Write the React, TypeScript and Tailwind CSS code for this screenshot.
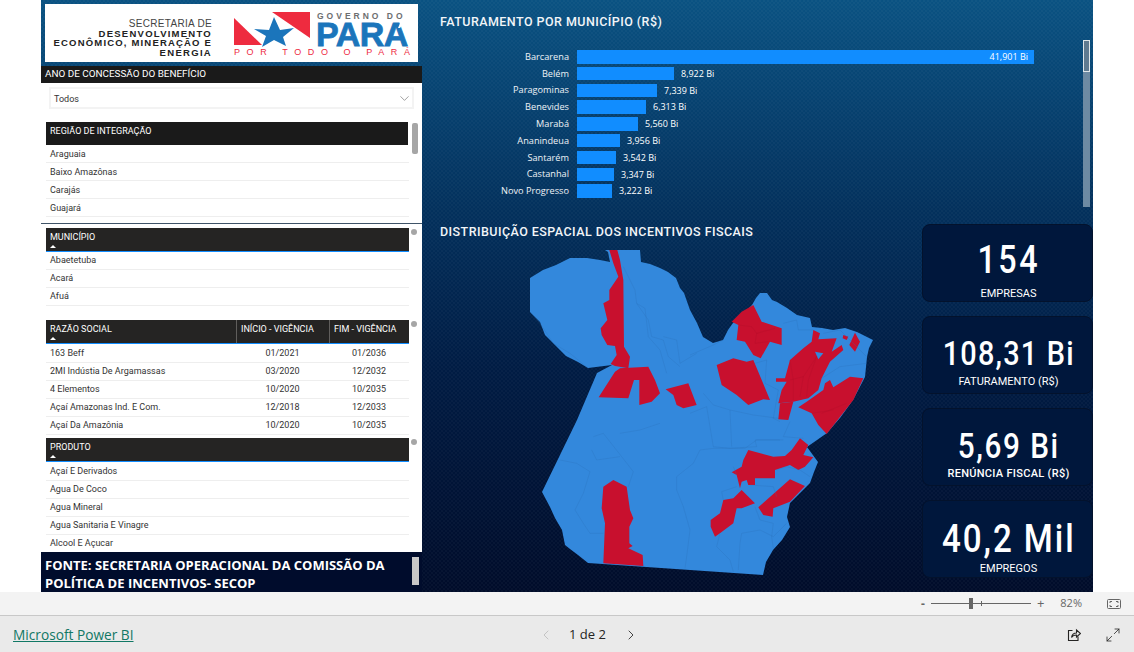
import { ChevronDown, ChevronLeft, ChevronRight, Maximize2 } from 'lucide-react'

const FATURAMENTO = [
  { nome: 'Barcarena', valor: '41,901 Bi', w: 457 },
  { nome: 'Belém', valor: '8,922 Bi', w: 97 },
  { nome: 'Paragominas', valor: '7,339 Bi', w: 80 },
  { nome: 'Benevides', valor: '6,313 Bi', w: 69 },
  { nome: 'Marabá', valor: '5,560 Bi', w: 61 },
  { nome: 'Ananindeua', valor: '3,956 Bi', w: 43 },
  { nome: 'Santarém', valor: '3,542 Bi', w: 39 },
  { nome: 'Castanhal', valor: '3,347 Bi', w: 37 },
  { nome: 'Novo Progresso', valor: '3,222 Bi', w: 35 },
]

const EMPRESAS = [
  ['163 Beff', '01/2021', '01/2036'],
  ['2MI Indústia De Argamassas', '03/2020', '12/2032'],
  ['4 Elementos', '10/2020', '10/2035'],
  ['Açaí Amazonas Ind. E Com.', '12/2018', '12/2033'],
  ['Açaí Da Amazônia', '10/2020', '10/2035'],
]

const KPIS = [
  { valor: '154', rotulo: 'EMPRESAS', num: 'mt-[16px] text-[38px] tracking-[3px]', rot: 'mt-[8px]' },
  { valor: '108,31 Bi', rotulo: 'FATURAMENTO (R$)', num: 'mt-[17px] text-[34px] tracking-[1.4px]', rot: 'mt-[3px]' },
  { valor: '5,69 Bi', rotulo: 'RENÚNCIA FISCAL (R$)', num: 'mt-[19px] text-[35px] tracking-[1.8px]', rot: 'mt-[1px] font-medium tracking-[0.3px]' },
  { valor: '40,2 Mil', rotulo: 'EMPREGOS', num: 'mt-[19px] text-[39px] tracking-[2.3px]', rot: 'mt-[4px]' },
]

const LOGO_FONT = "font-['Liberation_Sans',sans-serif]"

function Logo() {
  return (
    <div className="mx-[4px] mt-[4px] flex h-[58px] w-[373px] bg-white">
      <div className={`w-[167px] pt-[15px] text-right text-[9.5px] leading-[9.7px] whitespace-nowrap text-[#222] ${LOGO_FONT}`}>
        <div className="text-[10px] font-normal tracking-[0.3px] text-[#444]">SECRETARIA DE</div>
        <div className="font-bold tracking-[1.25px]">DESENVOLVIMENTO</div>
        <div className="font-bold tracking-[1.18px]">ECONÔMICO, MINERAÇÃO E</div>
        <div className="font-bold tracking-[1.3px]">ENERGIA</div>
      </div>
      <div className="relative ml-[22px] h-[58px] w-[178px]">
        <svg width="178" height="58" viewBox="0 0 178 58" className="absolute top-0 left-0">
          <polygon points="0,14 28,41 0,41" fill="#ee2b3f" />
          <polygon points="38,8 76,8 76,34" fill="#ee2b3f" />
          <polygon points="40,13 46,26 60,24 49,33 52,42 40,36 28,43 32,32 20,25 35,26" fill="#1b75bb" />
        </svg>
        <div className={`absolute top-[8px] left-[83px] text-[8.5px] leading-[9px] font-bold tracking-[3px] whitespace-nowrap text-[#6d6e70] ${LOGO_FONT}`}>
          GOVERNO DO
        </div>
        <div className={`absolute top-[18px] left-[82px] text-[34px] leading-[24px] font-bold tracking-[-0.5px] text-[#1b75bb] [-webkit-text-stroke:0.8px_#1b75bb] ${LOGO_FONT}`}>
          PARA
        </div>
        <svg width="8" height="8" viewBox="0 0 8 8" className="absolute top-[17px] left-[164px]">
          <polygon points="3,0 7,0 2,7 0,7" fill="#ffffff" />
        </svg>
        <div className={`absolute top-[44px] left-0 text-[9px] leading-[9px] tracking-[6.6px] whitespace-nowrap text-[#ee2b3f] ${LOGO_FONT}`}>
          POR TODO O PARÁ
        </div>
      </div>
    </div>
  )
}

function TabelaHead({ titulo }: { titulo: string }) {
  return (
    <div className="relative ml-[5px] h-[24px] w-[363px] border-b border-[#118dff] bg-[#252423] pl-[4px] text-white">
      <div className="pt-[3px] text-[9px] leading-[12px]">{titulo}</div>
      <Seta />
      <Bolinha />
    </div>
  )
}

function Seta() {
  return <div className="absolute bottom-[3px] left-[4px] h-0 w-0 border-x-[3px] border-b-[3px] border-x-transparent border-b-white" />
}

function Bolinha() {
  return <div className="absolute top-[1px] -right-[8px] h-[6px] w-[6px] rounded-full bg-[#a6a6a6]" />
}

function Linha({ texto, baixa = false }: { texto: string; baixa?: boolean }) {
  return (
    <div className={`ml-[5px] h-[18px] w-[363px] border-b border-[#eeeeee] pl-[4px] text-[9px] text-[#333] ${baixa ? 'leading-[19px]' : 'leading-[17px]'}`}>
      {texto}
    </div>
  )
}

function PainelFiltros() {
  return (
    <div className="relative h-[486px] w-[381px] overflow-hidden bg-white font-['Roboto',sans-serif]">
      <div className="h-[17px] bg-[#1a1a1a] pl-[4px] text-[9.9px] leading-[16px] text-white">
        ANO DE CONCESSÃO DO BENEFÍCIO
      </div>
      <div className="mt-[4px] ml-[8px] flex h-[22px] w-[365px] items-center justify-between border-2 border-[#f3f3f3] pl-[3px] text-[9px] text-[#333]">
        <span className="pt-[3px]">Todos</span>
        <ChevronDown size={15} strokeWidth={1} className="text-[#666]" />
      </div>
      <div className="relative mt-[13px] ml-[5px] h-[23px] w-[362px] bg-[#1a1a1a] pt-[2px] pl-[4px] text-[9px] leading-[14px] text-white">
        REGIÃO DE INTEGRAÇÃO
        <div className="absolute top-[1px] -right-[10px] h-[31px] w-[6px] rounded-[2px] bg-[#a6a6a6]" />
      </div>
      {['Araguaia', 'Baixo Amazônas', 'Carajás', 'Guajará'].map((r) => (
        <Linha key={r} texto={r} baixa />
      ))}
      <div className="mt-[6px] border-t border-[#3f5468]" />

      <div className="mt-[4px]">
        <TabelaHead titulo="MUNICÍPIO" />
        {['Abaetetuba', 'Acará', 'Afuá'].map((r) => (
          <Linha key={r} texto={r} />
        ))}
      </div>

      <div className="relative mt-[14px] ml-[5px] flex h-[24px] w-[363px] border-b border-[#118dff] bg-[#252423] text-[9px] leading-[12px] text-white">
        <div className="relative w-[190px] pt-[3px] pl-[4px]">
          RAZÃO SOCIAL
          <Seta />
        </div>
        <div className="w-[93px] border-l border-[#605e5c] pt-[3px] pl-[4px]">INÍCIO - VIGÊNCIA</div>
        <div className="border-l border-[#605e5c] pt-[3px] pl-[4px]">FIM - VIGÊNCIA</div>
        <Bolinha />
      </div>
      <div className="h-[1px]" />
      {EMPRESAS.map(([nome, inicio, fim]) => (
        <div key={nome} className="ml-[5px] flex h-[18px] w-[363px] border-b border-[#eeeeee] text-[9px] leading-[17px] text-[#333]">
          <div className="w-[190px] pl-[4px]">{nome}</div>
          <div className="w-[93px] text-center">{inicio}</div>
          <div className="flex-1 text-center">{fim}</div>
        </div>
      ))}

      <div className="mt-[3px]">
        <TabelaHead titulo="PRODUTO" />
        <div className="h-[1px]" />
        {['Açaí E Derivados', 'Agua De Coco', 'Agua Mineral', 'Agua Sanitaria E Vinagre', 'Alcool E Açucar'].map((r) => (
          <Linha key={r} texto={r} />
        ))}
      </div>
    </div>
  )
}

function Fonte() {
  return (
    <div className="relative h-[40px] w-[381px] bg-[#000c2c] pt-[4px] pl-[4px] font-['Open_Sans',sans-serif] text-[13px] leading-[18px] font-bold text-white">
      FONTE: SECRETARIA OPERACIONAL DA COMISSÃO DA
      <br />
      POLÍTICA DE INCENTIVOS- SECOP
      <div className="absolute top-[5px] left-[371px] h-[28px] w-[7px] bg-[#c8c8c8]" />
    </div>
  )
}

function GraficoBarras() {
  return (
    <div className="relative h-[207px]">
      <div className="pt-[14px] pl-[18px] font-['Roboto',sans-serif] text-[12.5px] leading-[16px] font-medium tracking-[0.45px] text-[#f2f5f8]">
        FATURAMENTO POR MUNICÍPIO (R$)
      </div>
      <div className="mt-[20px] flex flex-col gap-[3.3px] font-['Open_Sans',sans-serif] text-[9px] text-white">
        {FATURAMENTO.map((b, i) => (
          <div key={b.nome} className="flex h-[13.5px] items-center">
            <div className="w-[147px] text-right text-[9.2px] text-[#eef2f6]">{b.nome}</div>
            <div className="ml-[8px] flex h-[13.5px] items-center justify-end bg-[#118dff] pr-[6px]" style={{ width: b.w }}>
              {i === 0 && b.valor}
            </div>
            {i > 0 && <div className="ml-[7px]">{b.valor}</div>}
          </div>
        ))}
      </div>
      <div className="absolute top-[40px] left-[661px] h-[167px] w-[7px] bg-[#6d8aa3]">
        <div className="h-[32px] border border-[#dfe6ea] bg-[#5f7a90]" />
      </div>
    </div>
  )
}

// mapa do Pará, pontos anotados por recorte e reposicionados com transform
function Mapa() {
  return (
    <svg width="360" height="344" viewBox="530 240 360 344" className="block">
      <polygon
        fill="#3388dc"
        points="605,250 640,250 641,262 650,264 660,268 668,272 676,278 680,288 684,293 690,310 697,323 703,337 713,343 723,340 728,330 733,323 742,315 752,305 756,298 760,293 767,293 772,300 777,302 787,308 797,315 810,318 812,327 822,328 833,330 845,328 857,332 873,340 869,348 867,357 865,377 853,400 840,418 827,433 807,447 818,462 814,472 810,483 800,493 790,503 787,517 790,527 782,540 773,550 766,562 763,575 588,563 578,555 570,549 565,545 562,530 555,518 550,507 542,492 560,455 577,420 597,373 612,365 588,368 578,362 566,356 553,343 545,335 540,322 530,312 530,278 543,270 556,265 570,258 587,258 600,260 610,262 608,252"
      />
      <g transform="translate(520 240) scale(0.3333)" fill="#c8102e">
        <polygon points="268,30 292,30 300,60 310,120 312,320 330,350 325,385 285,378 272,372 290,345 285,318 262,315 245,285 242,265 262,240 250,190 268,180 268,150 295,110 280,70" />
        <polygon points="300,385 385,380 405,420 420,460 395,485 358,495 358,420 342,420 325,475 236,472 285,395" />
        <polygon points="437,448 465,440 505,430 530,495 490,505 470,495 460,465" />
      </g>
      <g transform="translate(690 290) scale(0.3333)" fill="#c8102e">
        <polygon points="190,45 215,95 275,115 275,165 240,155 212,205 190,195 165,155 140,150 145,105 125,95 155,65" />
        <polygon points="80,225 130,205 170,215 190,210 240,330 220,328 175,345 140,315 95,285" />
        <polygon points="370,120 390,130 385,148 440,145 425,185 455,165 460,180 420,215 395,265 385,300 355,325 310,335 265,340 275,300 290,275 258,275 258,265 285,265 300,210 340,175 365,155" />
        <polygon points="375,185 400,190 385,208" fill="#3388dc" />
        <polygon points="495,128 510,155 495,185 478,165" />
        <polygon points="460,135 475,140 470,150 458,145" />
        <polygon points="405,280 420,270 430,292 480,260 520,265 490,330 410,432 385,405 365,370 325,352 350,335 400,300" />
        <polygon points="270,340 310,335 295,390 265,388" />
      </g>
      <g transform="translate(560 420) scale(0.3333)" fill="#c8102e">
        <polygon points="720,55 745,75 730,105 760,112 735,140 715,150 690,135 645,150 645,175 585,175 585,195 565,195 560,180 545,185 540,205 530,165 515,157 545,140 550,120 565,90 640,110 675,108 695,90" />
        <polygon points="545,210 585,250 545,265 530,265 520,310 480,340 465,350 452,320 452,300 480,280 490,240 520,235" />
        <polygon points="690,178 735,198 690,245 640,265 638,290 610,285 595,262" />
        <polygon points="160,180 200,200 210,270 220,295 208,320 208,370 218,378 205,385 248,405 250,438 130,430 135,310 125,265 130,200" />
      </g>
      {/* divisas municipais */}
      <g fill="none" stroke="#2a6db5" strokeWidth="0.8">
        <g transform="translate(520 240) scale(0.3333)">
          <path d="M30,215 L60,250 100,310 150,340 205,385" />
          <path d="M310,80 L345,150 350,190 385,240 395,290 430,300 445,350 480,380" />
          <path d="M430,290 L470,300 480,370 530,340" />
          <path d="M350,190 L375,205 385,290 420,330 440,400" />
        </g>
        <g transform="translate(690 290) scale(0.3333)">
          <path d="M0,195 L70,165 100,150" />
          <path d="M40,310 L70,345 120,360 125,470 M0,370 L50,350 70,470 120,475 200,470" />
          <path d="M195,220 L230,210 225,280 265,300 250,385 270,395 M120,360 L190,375 265,385" />
          <path d="M280,100 L320,90 325,120 370,120 M400,130 L450,120 530,200 M395,265 L450,230 530,220" />
          <path d="M300,395 L280,440 340,445 M200,470 L195,450 270,450" />
        </g>
        <g transform="translate(560 420) scale(0.3333)">
          <path d="M0,120 L50,130 90,155 70,220 45,270 70,310 90,340 130,340" />
          <path d="M100,50 L130,40 185,110 220,155 205,200" />
          <path d="M95,90 L110,120 180,110 M180,40 L240,30 300,10" />
          <path d="M460,85 L420,90 400,130 350,170 350,210 370,260 390,330 380,410 375,445" />
          <path d="M460,85 L555,85 590,60 670,60 M520,140 L530,165" />
          <path d="M480,340 L470,380 510,420 520,455 M540,370 L545,340 600,330 640,350 680,310 M540,370 L535,450" />
          <path d="M585,260 L600,300 640,310 635,350 640,385" />
          <path d="M490,240 L485,215 530,200 M570,195 L640,200 650,230" />
          <path d="M650,150 L680,140 720,150 750,170" />
        </g>
      </g>
      {/* divisas dentro das áreas vermelhas */}
      <g fill="none" stroke="#a50f28" strokeWidth="0.7" transform="translate(690 290) scale(0.3333)">
        <path d="M145,105 L185,110 200,130 255,115 M200,130 L195,160 235,155" />
        <path d="M300,270 L340,260 380,200 M340,260 L330,320 M300,210 L310,270 310,330 M380,200 L355,270 350,320" />
        <path d="M395,370 L470,340 M365,370 L430,360" />
      </g>
    </svg>
  )
}

function CartaoKpi({ valor, rotulo, num, rot }: { valor: string; rotulo: string; num: string; rot: string }) {
  return (
    <div className="h-[78px] w-[171px] rounded-[8px] border border-[#03122c] bg-[#00173c] text-center text-white">
      <div className={`scale-x-[0.85] pl-[3px] font-['Roboto',sans-serif] leading-[38px] font-medium whitespace-nowrap ${num}`}>{valor}</div>
      <div className={`pl-[2px] font-['Roboto',sans-serif] text-[11px] leading-[13px] ${rot}`}>{rotulo}</div>
    </div>
  )
}

function Relatorio() {
  return (
    <div className="flex h-[592px] w-[1052px] bg-[repeating-conic-gradient(#ffffff07_0%_25%,transparent_0%_50%),linear-gradient(180deg,#0a5282_0%,#03305c_36%,#001c44_62%,#000c2a_100%)] bg-[length:4px_4px,100%_100%]">
      <div className="flex w-[381px] flex-col">
        <Logo />
        <div className="mt-[4px]">
          <PainelFiltros />
        </div>
        <Fonte />
      </div>
      <div className="flex-1">
        <GraficoBarras />
        <div className="flex">
          <div className="flex-1">
            <div className="pt-[17px] pl-[18px] font-['Roboto',sans-serif] text-[12.5px] leading-[16px] font-medium tracking-[0.45px] text-[#f2f5f8]">
              DISTRIBUIÇÃO ESPACIAL DOS INCENTIVOS FISCAIS
            </div>
            <div className="pl-[108px]">
              <Mapa />
            </div>
          </div>
          <div className="mt-[17px] flex flex-col gap-[14px]">
            {KPIS.map((k) => (
              <CartaoKpi key={k.rotulo} {...k} />
            ))}
          </div>
        </div>
      </div>
    </div>
  )
}

function BarraZoom() {
  return (
    <div className="flex h-[24px] items-center justify-end border-b border-[#c8c8c8] bg-[#f3f3f3] pr-[13px] font-['Open_Sans',sans-serif] text-[#666]">
      <span className="text-[12px] leading-none font-bold">-</span>
      <div className="relative mx-[6px] h-[1px] w-[100px] bg-[#666]">
        <div className="absolute -top-[5px] left-[38px] h-[11px] w-[4px] bg-[#666]" />
        <div className="absolute -top-[2px] left-[50px] h-[5px] w-[1px] bg-[#666]" />
      </div>
      <span className="text-[13px] leading-none">+</span>
      <span className="ml-[16px] text-[11px]">82%</span>
      <svg width="14" height="10" viewBox="0 0 14 10" fill="none" stroke="#666" className="ml-[25px]">
        <rect x="0.5" y="0.5" width="13" height="9" rx="1" />
        <path d="M3 4V2.5H5M9 2.5H11V4M11 6V7.5H9M5 7.5H3V6" />
      </svg>
    </div>
  )
}

function Rodape() {
  return (
    <div className="relative flex h-[36px] items-center justify-between bg-[#eaeaea] px-[13px] pt-[2px] font-['Open_Sans',sans-serif]">
      <a href="#" className="text-[13.7px] text-[#117865] underline">Microsoft Power BI</a>
      <div className="absolute top-0 left-[538px] flex h-[38px] items-center text-[13px] font-medium text-[#252423]">
        <ChevronLeft size={16} strokeWidth={1.5} className="text-[#c4c4c4]" />
        <span className="ml-[15px] mr-[17px]">1 de 2</span>
        <ChevronRight size={16} strokeWidth={1.5} className="text-[#444]" />
      </div>
      <div className="flex items-center gap-[24px] text-[#252423]">
        <svg width="14" height="14" viewBox="0 0 14 14" fill="none" stroke="currentColor" strokeWidth="1.1">
          <path d="M5.5 2.5H1.5V12.5H11V8.5" />
          <path d="M4.5 9.5C5 6.5 7 5 9.5 5V2L13.5 5.5L9.5 9V7C7.5 7 5.5 7.8 4.5 9.5Z" />
        </svg>
        <Maximize2 size={16} strokeWidth={1.2} />
      </div>
    </div>
  )
}

export default function App() {
  return (
    <div className="h-[652px] w-[1134px] overflow-hidden bg-white">
      <div className="pl-[41px]">
        <Relatorio />
      </div>
      <BarraZoom />
      <Rodape />
    </div>
  )
}
